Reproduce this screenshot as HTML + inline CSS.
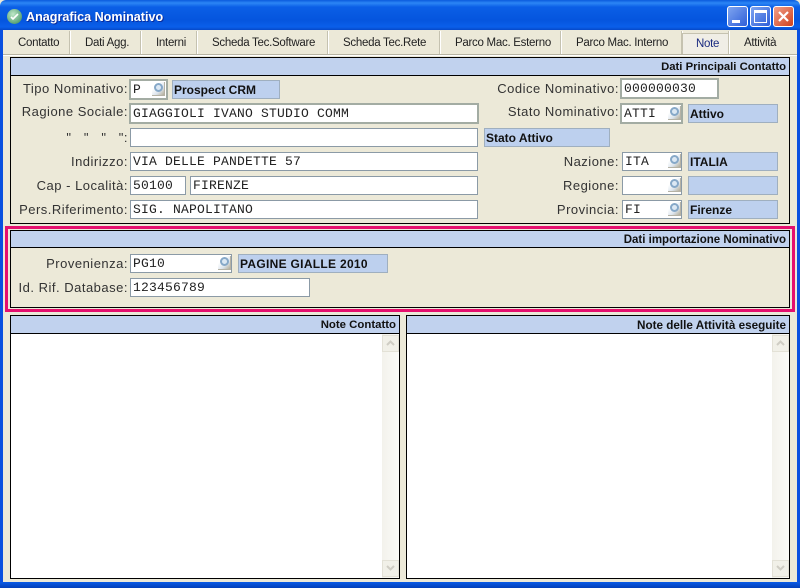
<!DOCTYPE html>
<html><head><meta charset="utf-8">
<style>
html,body{margin:0;padding:0;width:800px;height:588px;overflow:hidden;background:#ECE9D8}
*,*:after{box-sizing:border-box}
div,span{position:absolute}
body{font-family:"Liberation Sans",sans-serif;color:#222}
.tab{top:36px;font-size:11.5px;line-height:14px;white-space:nowrap;color:#222;letter-spacing:-.28px}
.sep{top:31px;width:2px;height:23px;border-left:1px solid #C5C2B0;border-right:1px solid #fff}
.panel{border:1px solid #000;background:#ECE9D8}
.hd{background:#C1D2EE;border-bottom:1px solid #000;font-weight:bold;font-size:11.3px;text-align:right;color:#111;padding-right:3px;white-space:nowrap;padding-top:1px}
.lb{font-size:13px;line-height:16px;letter-spacing:.5px;text-align:right;white-space:pre;color:#333}
.f{background:#fff;border:1px solid #8B9AA6;font-family:"Liberation Mono",monospace;font-size:13px;line-height:17px;padding-left:2px;letter-spacing:.2px;white-space:pre;color:#222;height:19px}
.f2{border:2px solid #A3ACA3;line-height:17px;padding-left:2px;height:21px}
.d{background:#BDD0EE;border:1px solid #9FAFBF;font-weight:bold;font-size:12px;line-height:19px;padding-left:1px;color:#111;height:19px;white-space:nowrap}
.m{width:13px;height:14px;background:linear-gradient(135deg,#fff 30%,#DDE5EE 65%,#B5AE98);border-right:1px solid #B5B2A5;border-bottom:1px solid #B5B2A5}
.m:after{content:"";position:absolute;left:2px;top:1px;width:9px;height:9px;border:2px solid #86A8C8;border-radius:50%;background:#DCE8F4}
.sb{width:17px;background:linear-gradient(90deg,#F3F2EC,#FBFBF8)}
.btn{left:0;width:17px;height:17px;background:#F1F0E8;border:1px solid #E3E1D6}
</style></head><body>
<!-- window frame -->
<div style="left:0;top:0;width:800px;height:30px;background:linear-gradient(180deg,#0A5BDD 0,#2C86F5 3px,#0B5FE6 7px,#0555DE 20px,#0A5FEA 27px,#0648C8 30px);border-radius:6px 6px 0 0"></div>
<div style="left:0;top:30px;width:3px;height:558px;background:#0A50E0"></div>
<div style="left:797px;top:30px;width:3px;height:558px;background:#0A50E0"></div>
<div style="left:0;top:582px;width:800px;height:6px;background:linear-gradient(180deg,#0A5AE6,#0440B8)"></div>
<div style="left:7px;top:9px;width:15px;height:15px;border-radius:50%;background:radial-gradient(circle at 40% 35%,#bfe8c8,#4d9a6c 80%)"></div>
<svg style="position:absolute;left:7px;top:9px" width="15" height="15"><path d="M4 8l2 2 5-5" stroke="#fff" stroke-width="1.6" fill="none"/></svg>
<div style="left:26px;top:9px;color:#fff;font-weight:bold;font-size:12.6px;line-height:16px;white-space:nowrap;text-shadow:1px 1px 0 #0A2C9C">Anagrafica Nominativo</div>
<!-- window buttons -->
<div style="left:727px;top:6px;width:21px;height:21px;border:1px solid #fff;border-radius:3px;background:linear-gradient(135deg,#7FA5F0,#2F5FD8)"><div style="left:4px;top:13px;width:8px;height:3px;background:#fff"></div></div>
<div style="left:750px;top:6px;width:21px;height:21px;border:1px solid #fff;border-radius:3px;background:linear-gradient(135deg,#7FA5F0,#2F5FD8)"><div style="left:3px;top:3px;width:13px;height:13px;border:1px solid #fff;border-top-width:3px"></div></div>
<div style="left:773px;top:6px;width:21px;height:21px;border:1px solid #fff;border-radius:3px;background:linear-gradient(135deg,#F0A08A,#D0401C)"><svg style="position:absolute;left:3px;top:3px" width="13" height="13"><path d="M2 2l9 9M11 2l-9 9" stroke="#fff" stroke-width="2.2"/></svg></div>
<!-- tabs -->
<div style="left:3px;top:54px;width:794px;height:2px;border-top:1px solid #B8B5A3;border-bottom:1px solid #fff"></div>
<div class="tab" style="left:18px">Contatto</div><div class="sep" style="left:69px"></div>
<div class="tab" style="left:85px">Dati Agg.</div><div class="sep" style="left:140px"></div>
<div class="tab" style="left:156px">Interni</div><div class="sep" style="left:196px"></div>
<div class="tab" style="left:212px">Scheda Tec.Software</div><div class="sep" style="left:327px"></div>
<div class="tab" style="left:343px">Scheda Tec.Rete</div><div class="sep" style="left:439px"></div>
<div class="tab" style="left:455px">Parco Mac. Esterno</div><div class="sep" style="left:560px"></div>
<div class="tab" style="left:576px">Parco Mac. Interno</div><div class="sep" style="left:681px"></div>
<div style="left:682px;top:33px;width:47px;height:21px;background:#F0EEE6;border:1px solid #C5C2B0;border-bottom:0"></div>
<div class="tab" style="left:696px;top:37px;color:#1A2A80">Note</div><div class="sep" style="left:728px"></div>
<div class="tab" style="left:744px">Attività</div>
<!-- panel 1 -->
<div class="panel" style="left:10px;top:57px;width:780px;height:167px"></div>
<div class="hd" style="left:11px;top:58px;width:778px;height:18px;line-height:17px">Dati Principali Contatto</div>
<div class="lb" style="left:12px;top:81px;width:116px">Tipo Nominativo:</div>
<div class="f f2" style="left:129px;top:79px;width:39px">P</div><div class="m" style="left:152px;top:82px"></div>
<div class="d" style="left:172px;top:80px;width:108px">Prospect CRM</div>
<div class="lb" style="left:12px;top:104px;width:116px">Ragione Sociale:</div>
<div class="f f2" style="left:129px;top:103px;width:350px">GIAGGIOLI IVANO STUDIO COMM</div>
<div class="lb" style="left:12px;top:130px;width:116px">"   "   "   ":</div>
<div class="f" style="left:130px;top:128px;width:348px"></div>
<div class="d" style="left:484px;top:128px;width:126px">Stato Attivo</div>
<div class="lb" style="left:12px;top:154px;width:116px">Indirizzo:</div>
<div class="f" style="left:130px;top:152px;width:348px">VIA DELLE PANDETTE 57</div>
<div class="lb" style="left:12px;top:178px;width:116px">Cap - Località:</div>
<div class="f" style="left:130px;top:176px;width:56px">50100</div>
<div class="f" style="left:190px;top:176px;width:288px">FIRENZE</div>
<div class="lb" style="left:12px;top:202px;width:116px">Pers.Riferimento:</div>
<div class="f" style="left:130px;top:200px;width:348px">SIG. NAPOLITANO</div>
<div class="lb" style="left:470px;top:81px;width:149px">Codice Nominativo:</div>
<div class="f f2" style="left:620px;top:78px;width:99px">000000030</div>
<div class="lb" style="left:470px;top:104px;width:149px">Stato Nominativo:</div>
<div class="f f2" style="left:620px;top:103px;width:63px">ATTI</div><div class="m" style="left:668px;top:106px"></div>
<div class="d" style="left:688px;top:104px;width:90px">Attivo</div>
<div class="lb" style="left:470px;top:154px;width:149px">Nazione:</div>
<div class="f" style="left:622px;top:152px;width:60px">ITA</div><div class="m" style="left:668px;top:154px"></div>
<div class="d" style="left:688px;top:152px;width:90px">ITALIA</div>
<div class="lb" style="left:470px;top:178px;width:149px">Regione:</div>
<div class="f" style="left:622px;top:176px;width:60px"></div><div class="m" style="left:668px;top:178px"></div>
<div class="d" style="left:688px;top:176px;width:90px"></div>
<div class="lb" style="left:470px;top:202px;width:149px">Provincia:</div>
<div class="f" style="left:622px;top:200px;width:60px">FI</div><div class="m" style="left:668px;top:202px"></div>
<div class="d" style="left:688px;top:200px;width:90px">Firenze</div>
<!-- panel 2 -->
<div style="left:5px;top:226px;width:790px;height:86px;border:3px solid #E5106E"></div>
<div class="panel" style="left:10px;top:230px;width:780px;height:78px"></div>
<div class="hd" style="left:11px;top:231px;width:778px;height:17px;line-height:16px;font-size:11.5px">Dati importazione Nominativo</div>
<div class="lb" style="left:12px;top:256px;width:116px">Provenienza:</div>
<div class="f" style="left:130px;top:254px;width:102px">PG10</div><div class="m" style="left:218px;top:256px"></div>
<div class="d" style="left:238px;top:254px;width:150px;letter-spacing:.3px">PAGINE GIALLE 2010</div>
<div class="lb" style="left:12px;top:280px;width:116px">Id. Rif. Database:</div>
<div class="f" style="left:130px;top:278px;width:180px">123456789</div>
<!-- notes -->
<div class="panel" style="left:10px;top:315px;width:390px;height:264px;background:#fff"></div>
<div class="hd" style="left:11px;top:316px;width:388px;height:18px;line-height:17px;font-size:11.4px">Note Contatto</div>
<div class="sb" style="left:382px;top:334px;height:244px"><div class="btn" style="top:1px"></div><div class="btn" style="top:226px"></div></div>
<svg style="position:absolute;left:382px;top:334px" width="17" height="244"><path d="M5 11l3.5-3.5 3.5 3.5M5 232l3.5 3.500 3.500-3.500" stroke="#CFCDC4" stroke-width="2" fill="none"/></svg>
<div class="panel" style="left:406px;top:315px;width:384px;height:264px;background:#fff"></div>
<div class="hd" style="left:407px;top:316px;width:382px;height:18px;line-height:17px;font-size:11.7px">Note delle Attività eseguite</div>
<div class="sb" style="left:772px;top:334px;height:244px"><div class="btn" style="top:1px"></div><div class="btn" style="top:226px"></div></div>
<svg style="position:absolute;left:772px;top:334px" width="17" height="244"><path d="M5 11l3.5-3.5 3.5 3.5M5 232l3.5 3.500 3.500-3.500" stroke="#CFCDC4" stroke-width="2" fill="none"/></svg>
</body></html>
